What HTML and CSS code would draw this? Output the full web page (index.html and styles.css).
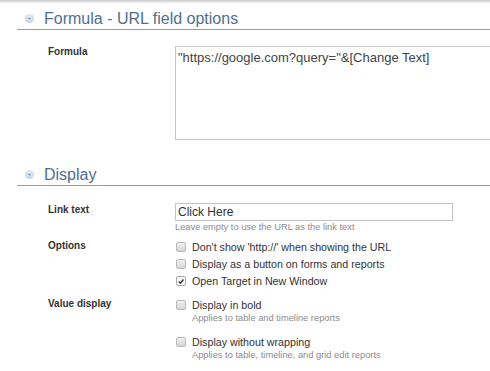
FILE: index.html
```html
<!DOCTYPE html>
<html lang="en">
<head>
    <meta charset="UTF-8">
    <title>URL field options</title>
    <link rel="stylesheet" href="styles.css">
</head>
<body>
    <div class="top-shade"></div>

    <!-- Formula section -->
    <div class="section">
        <div class="section-head">
            <span class="toggle"><svg width="9" height="9" viewBox="0 0 9 9"><path d="M2.5 3.8 L6.5 3.8 L4.5 5.8 Z" fill="#7d98b3"/></svg></span>
            <h2>Formula - URL field options</h2>
        </div>
        <div class="row row-formula">
            <div class="label">Formula</div>
            <div class="field">
                <div class="textarea">"https://google.com?query="&amp;[Change Text]</div>
            </div>
        </div>
    </div>

    <!-- Display section -->
    <div class="section">
        <div class="section-head">
            <span class="toggle"><svg width="9" height="9" viewBox="0 0 9 9"><path d="M2.5 3.8 L6.5 3.8 L4.5 5.8 Z" fill="#7d98b3"/></svg></span>
            <h2>Display</h2>
        </div>
        <div class="row row-link">
            <div class="label">Link text</div>
            <div class="field">
                <div class="text-input">Click Here</div>
                <div class="hint">Leave empty to use the URL as the link text</div>
            </div>
        </div>
        <div class="row row-options">
            <div class="label">Options</div>
            <div class="field">
                <div class="check"><span class="box"></span>Don't show 'http://' when showing the URL</div>
                <div class="check"><span class="box"></span>Display as a button on forms and reports</div>
                <div class="check"><span class="box checked"><svg width="9" height="9" viewBox="0 0 9 9"><path d="M2 4.6 L3.8 6.5 L7.2 2.3" fill="none" stroke="#333" stroke-width="1.6"/></svg></span>Open Target in New Window</div>
            </div>
        </div>
        <div class="row row-value">
            <div class="label">Value display</div>
            <div class="field">
                <div class="check"><span class="box"></span>Display in bold</div>
                <div class="hint hint-check">Applies to table and timeline reports</div>
                <div class="check check-gap"><span class="box"></span>Display without wrapping</div>
                <div class="hint hint-check">Applies to table, timeline, and grid edit reports</div>
            </div>
        </div>
    </div>
</body>
</html>
```

FILE: styles.css
```css
* {
    margin: 0;
    padding: 0;
    box-sizing: border-box;
}

body {
    width: 490px;
    height: 371px;
    overflow: hidden;
    background: #fff;
    font-family: 'Liberation Sans', Arial, sans-serif;
    color: #333;
}

.top-shade {
    height: 4px;
    background: linear-gradient(#c9c9c9, #f2f2f2 70%, #fff);
}

.section {
    padding-left: 17px;
}

.section-head {
    display: flex;
    align-items: flex-end;
    height: 26px;
    padding-bottom: 1px;
    border-bottom: 1px solid #8d9db0;
}

.toggle {
    width: 9px;
    height: 9px;
    margin-left: 8px;
    margin-right: 10px;
    margin-bottom: 5px;
    border-radius: 50%;
    background: radial-gradient(circle at 50% 35%, #eef4fa, #b4c9de);
    display: flex;
}

.section-head h2 {
    font-size: 16px;
    font-weight: normal;
    color: #4f6f8f;
    line-height: 18px;
}

.row {
    display: grid;
    grid-template-columns: 158px 1fr;
}

.label {
    padding-left: 31px;
    font-size: 10px;
    font-weight: bold;
    color: #333;
}

.row-formula {
    margin-top: 16px;
}

.textarea {
    width: 340px;
    height: 94px;
    border: 1px solid #c8c8c8;
    border-right: none;
    padding: 3px 2px;
    font-size: 13px;
    color: #444;
}

.section + .section {
    margin-top: 20px;
}

.row-link {
    margin-top: 17px;
}

.row-link .label {
    padding-top: 1px;
}

.text-input {
    width: 278px;
    height: 18px;
    border: 1px solid #c4c4c4;
    padding: 1px 2px;
    font-size: 12px;
    color: #333;
    line-height: 14px;
}

.hint {
    font-size: 9.3px;
    color: #8c8c8c;
    margin-top: 1px;
}

.row-options {
    margin-top: 6px;
}

.row-options .label,
.row-value .label {
    padding-top: 2px;
}

.check {
    display: flex;
    align-items: center;
    height: 17px;
    font-size: 10.7px;
    color: #333;
}

.box {
    width: 10px;
    height: 10px;
    margin-left: 1px;
    margin-right: 6px;
    border: 1px solid #b9b9b9;
    border-radius: 2px;
    background: linear-gradient(#f0f0f0, #d6d6d6);
    display: flex;
}

.box.checked {
    background: #fafafa;
    border-color: #aaa;
}

.row-value {
    margin-top: 7px;
}

.hint-check {
    padding-left: 17px;
    margin-top: 0;
}

.check-gap {
    margin-top: 10px;
}
```
